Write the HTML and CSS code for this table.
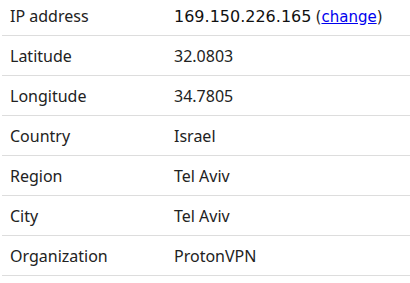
FILE: index.html
```html
<!DOCTYPE html>
<html>
<head>
<meta charset="utf-8">
<link rel="stylesheet" href="styles.css">
</head>
<body>
<table class="info">
  <tr class="first"><td class="label">IP address</td><td class="value"><span class="ip">169.150.226.165</span> <span class="paren">(<a href="#">change</a>)</span></td></tr>
  <tr><td class="label">Latitude</td><td class="value">32.0803</td></tr>
  <tr><td class="label">Longitude</td><td class="value">34.7805</td></tr>
  <tr><td class="label">Country</td><td class="value">Israel</td></tr>
  <tr><td class="label">Region</td><td class="value">Tel Aviv</td></tr>
  <tr><td class="label">City</td><td class="value">Tel Aviv</td></tr>
  <tr><td class="label">Organization</td><td class="value">ProtonVPN</td></tr>
</table>
</body>
</html>
```

FILE: styles.css
```css
html, body {
  margin: 0;
  padding: 0;
  background: #fff;
}
body {
  padding-left: 2px;
  font-family: "Noto Sans", sans-serif;
  font-size: 16px;
  color: #222;
}
.info {
  border-collapse: collapse;
  width: 408px;
}
.info td {
  height: 39px;
  padding: 0 8px;
  border-bottom: 1px solid #ddd;
  vertical-align: middle;
  line-height: 20px;
}
.info tr.first td {
  height: 32px;
  padding-bottom: 3px;
}
.label {
  width: 148px;
}
.ip {
  font-family: "DejaVu Sans", sans-serif;
  font-size: 16px;
  color: #111;
}
.paren {
  font-family: "DejaVu Sans", sans-serif;
  font-size: 15px;
}
.paren a {
  color: #0000ee;
}
```
